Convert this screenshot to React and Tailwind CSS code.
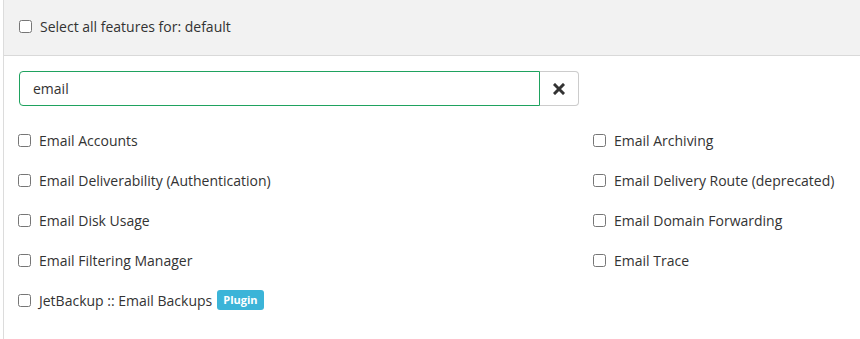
import React from "react";

const left = [
  "Email Accounts",
  "Email Deliverability (Authentication)",
  "Email Disk Usage",
  "Email Filtering Manager",
];
const right = [
  "Email Archiving",
  "Email Delivery Route (deprecated)",
  "Email Domain Forwarding",
  "Email Trace",
];

function Item({ label, plugin }) {
  return (
    <label className="flex items-center h-[40px] text-[14px] text-[#333]">
      <input type="checkbox" className="w-[13px] h-[13px] m-0 mr-[8px] ml-[-1px]" />
      <span>{label}</span>
      {plugin && (
        <span className="ml-[5px] px-[6px] h-[20px] flex items-center rounded-[3px] bg-[#3bb4d8] text-white text-[11px] font-bold">
          Plugin
        </span>
      )}
    </label>
  );
}

export default function App() {
  return (
    <div
      className="w-[860px] h-[339px] bg-white overflow-hidden pl-[3px]"
      style={{ fontFamily: '"Open Sans", "Noto Sans", sans-serif' }}
    >
      <div className="h-full border-l border-[#dcdcdc]">
        <div className="h-[56px] bg-[#f2f2f2] border-b border-[#d9d9d9] flex items-center pl-[16px] pb-[3px]">
          <label className="flex items-center text-[14px] text-[#333]">
            <input type="checkbox" className="w-[13px] h-[13px] m-0 mr-[8px] ml-[-1px]" />
            <span>Select all features for: default</span>
          </label>
        </div>
        <div className="pl-[15px] pt-[15px]">
          <div className="flex h-[35px] w-[560px]">
            <input
              defaultValue="email"
              className="flex-1 h-full border border-[#1fa25f] rounded-l-[4px] px-[13px] text-[14px] text-[#333] outline-none"
            />
            <button className="w-[39px] h-full border border-l-0 border-[#ccc] rounded-r-[4px] flex items-center justify-center bg-white">
              <svg width="12" height="12" viewBox="0 0 12 12">
                <path d="M2 2 L10 10 M10 2 L2 10" stroke="#333" strokeWidth="3" strokeLinecap="square" />
              </svg>
            </button>
          </div>
          <div className="grid grid-cols-[575px_1fr] mt-[14px]">
            <div>
              {left.map((l) => (
                <Item key={l} label={l} />
              ))}
              <Item label="JetBackup :: Email Backups" plugin />
            </div>
            <div>
              {right.map((l) => (
                <Item key={l} label={l} />
              ))}
            </div>
          </div>
        </div>
      </div>
    </div>
  );
}
